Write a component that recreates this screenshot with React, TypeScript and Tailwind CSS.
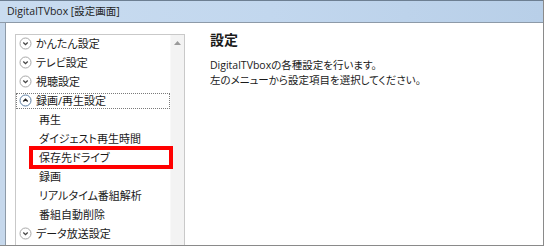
import React from "react";

const font = "font-['Open_Sans','Noto_Sans_CJK_JP',sans-serif] [font-feature-settings:'palt']";

function Chevron({ up }: { up?: boolean }) {
  return (
    <svg width="13" height="13" viewBox="0 0 13 13" className="shrink-0">
      <circle cx="6.5" cy="6.5" r="5.5" fill="white" stroke={up ? "#5b7ea3" : "#a8a8a8"} strokeWidth="1" />
      {up ? (
        <path d="M4.3 7.5 L6.5 5.3 L8.7 7.5" fill="none" stroke="#1e1e1e" strokeWidth="1.4" />
      ) : (
        <path d="M4.3 5.5 L6.5 7.7 L8.7 5.5" fill="none" stroke="#444444" strokeWidth="1.3" />
      )}
    </svg>
  );
}

function TopRow({ label, up, focus }: { label: string; up?: boolean; focus?: boolean }) {
  return (
    <div className="h-[19px] flex items-center">
      <div
        className={
          "flex items-center h-[16px] w-full gap-[4px] pl-[2px] " +
          (focus ? "border border-dotted border-[#7a7a7a]" : "border border-transparent")
        }
      >
        <Chevron up={up} />
        <span className="text-[11px] leading-none text-[#1a1a1a] whitespace-nowrap">{label}</span>
      </div>
    </div>
  );
}

function ChildRow({ label }: { label: string }) {
  return (
    <div className="h-[19px] flex items-center pl-[23px]">
      <span className="text-[11px] leading-none text-[#1a1a1a] whitespace-nowrap">{label}</span>
    </div>
  );
}

export default function App() {
  return (
    <div className={"relative w-[544px] h-[246px] overflow-hidden bg-white border-r border-b border-[#8a8a8a] " + font}>
      {/* title bar */}
      <div className="h-[23px] flex items-center pl-[7px] bg-gradient-to-r from-[#c9dcf0] via-[#c2d7ee] to-[#b8cfe8] border-t border-[#6d7f92] border-b border-b-[#8d9aa8]">
        <span className="text-[10.5px] leading-none text-[#1e1e1e] whitespace-nowrap">DigitalTVbox [設定画面]</span>
      </div>
      <div className="flex h-[222px]">
        {/* left frame */}
        <div className="w-[6px] bg-[#c6d8ec] border-r border-[#8d9aa8]" />
        {/* client */}
        <div className="flex-1 flex bg-white pt-[11px] pl-[9px]">
          {/* tree panel */}
          <div className="w-[170px] h-[230px] border border-[#c9c9c9] flex">
            <div className="flex-1 flex flex-col -mt-[1px]">
              <TopRow label="かんたん設定" />
              <TopRow label="テレビ設定" />
              <TopRow label="視聴設定" />
              <TopRow label="録画/再生設定" up focus />
              <ChildRow label="再生" />
              <ChildRow label="ダイジェスト再生時間" />
              <ChildRow label="保存先ドライブ" />
              <ChildRow label="録画" />
              <ChildRow label="リアルタイム番組解析" />
              <ChildRow label="番組自動削除" />
              <TopRow label="データ放送設定" />
            </div>
            {/* scrollbar */}
            <div className="w-[14px] bg-[#f3f3f3] border-l border-[#f8f8f8] flex justify-center pt-[6px]">
              <svg width="7" height="4" viewBox="0 0 7 4">
                <path d="M0 4 L3.5 0 L7 4 Z" fill="#9a9a9a" />
              </svg>
            </div>
          </div>
          {/* right pane */}
          <div className="flex flex-col pl-[25px] -mt-[3px]">
            <div className="text-[14px] font-bold leading-[18px] text-[#1a1a1a]">設定</div>
            <div className="mt-[9px] text-[10.5px] leading-[15px] text-[#1a1a1a] whitespace-nowrap">
              <div>DigitalTVboxの各種設定を行います。</div>
              <div>左のメニューから設定項目を選択してください。</div>
            </div>
          </div>
        </div>
      </div>
      {/* red annotation box */}
      <div className="absolute left-[29px] top-[146px] w-[144px] h-[23px] border-[4px] border-[#ff0000]" />
    </div>
  );
}
